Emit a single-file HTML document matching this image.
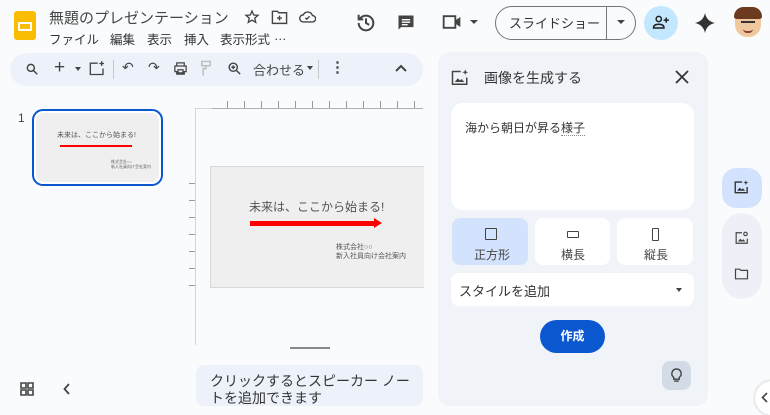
<!DOCTYPE html>
<html><head><meta charset="utf-8"><style>
*{box-sizing:border-box;margin:0;padding:0}
body{width:770px;height:414px;overflow:hidden;background:#f9fbfd;font-family:"Liberation Sans","Noto Sans CJK JP",sans-serif;color:#1f1f1f;position:relative}
.a{position:absolute}
svg{display:block}
.m{position:absolute;top:29px;font-size:12.5px;color:#333;white-space:nowrap}
</style></head><body>
<!-- logo -->
<div class="a" style="left:14px;top:11px;width:22px;height:29px;background:#fbbc04;border-radius:3px"></div>
<div class="a" style="left:18px;top:22px;width:14px;height:9px;border:2px solid #fff;border-radius:1px"></div>
<div class="a" style="left:49px;top:7px;font-size:15px;color:#444;white-space:nowrap">無題のプレゼンテーション</div>
<svg class="a" style="left:244px;top:9px" width="16" height="16" viewBox="0 0 24 24"><path d="M12 3l2.6 6 6.4.5-4.9 4.2 1.5 6.3L12 16.7 6.4 20l1.5-6.3L3 9.5l6.4-.5z" fill="none" stroke="#444" stroke-width="2"/></svg>
<svg class="a" style="left:271px;top:9px" width="17" height="16" viewBox="0 0 24 22"><path d="M2 3h7l2 2h11v15H2z M12 9v7M8.5 12.5h7" fill="none" stroke="#444" stroke-width="2"/></svg>
<svg class="a" style="left:299px;top:10px" width="17" height="14" viewBox="0 0 24 18"><path d="M6 16a5 5 0 010-10 7 7 0 0113 1 4.5 4.5 0 010 9z M9 10l2 2 4-4" fill="none" stroke="#444" stroke-width="2"/></svg>
<span class="m" style="left:49px">ファイル</span>
<span class="m" style="left:110px">編集</span>
<span class="m" style="left:147px">表示</span>
<span class="m" style="left:184px">挿入</span>
<span class="m" style="left:220px">表示形式</span>
<span class="m" style="left:274px">…</span>
<!-- history, comment -->
<svg class="a" style="left:355px;top:12px" width="22" height="22" viewBox="0 0 24 24"><path d="M4 12a8 8 0 108-8 8 8 0 00-6.5 3.3M4 3v5h5M12 7v5l3.5 2" fill="none" stroke="#444" stroke-width="2.2"/></svg>
<svg class="a" style="left:396px;top:13px" width="20" height="20" viewBox="0 0 24 24"><path d="M3 3h18v14H6l-3 3z" fill="#444"/><path d="M7 8h10M7 11h10M7 14h7" stroke="#fff" stroke-width="1.6"/></svg>
<svg class="a" style="left:442px;top:14px" width="20" height="16" viewBox="0 0 24 18"><path d="M2 2h14v14H2z" fill="none" stroke="#444" stroke-width="2.2"/><path d="M16 7l6-4v12l-6-4z" fill="#444"/></svg>
<div class="a" style="left:470px;top:20px;border:4px solid transparent;border-top:4px solid #444"></div>
<!-- slideshow btn -->
<div class="a" style="left:495px;top:6px;width:141px;height:34px;border:1px solid #747775;border-radius:17px"></div>
<div class="a" style="left:606px;top:7px;width:1px;height:32px;background:#747775"></div>
<div class="a" style="left:509px;top:13px;font-size:13px;color:#333">スライドショー</div>
<div class="a" style="left:617px;top:20px;border:4px solid transparent;border-top:4px solid #444"></div>
<div class="a" style="left:644px;top:6px;width:34px;height:34px;border-radius:50%;background:#c2e7ff"></div>
<svg class="a" style="left:652px;top:14px" width="18" height="16" viewBox="0 0 24 20"><circle cx="9" cy="6" r="3.5" fill="none" stroke="#1f1f1f" stroke-width="2"/><path d="M2 18c0-4 3.5-5 7-5s7 1 7 5z M19 4v7M15.5 7.5h7" fill="none" stroke="#1f1f1f" stroke-width="2"/></svg>
<svg class="a" style="left:694px;top:12px" width="22" height="22" viewBox="0 0 24 24"><path d="M12 1c1 6 5 10 11 11-6 1-10 5-11 11-1-6-5-10-11-11 6-1 10-5 11-11z" fill="#333"/></svg>
<!-- avatar -->
<div class="a" style="left:735px;top:9px;width:26px;height:28px;border-radius:45%;background:#f0c8a0"></div>
<div class="a" style="left:734px;top:7px;width:28px;height:12px;border-radius:12px 12px 3px 3px;background:#6b3a1f"></div>
<div class="a" style="left:741px;top:21px;width:14px;height:3px;border-top:2px solid #333"></div>
<div class="a" style="left:743px;top:29px;width:10px;height:4px;border-bottom:2px solid #8a4030;border-radius:0 0 5px 5px"></div>
<!-- toolbar -->
<div class="a" style="left:10px;top:53px;width:413px;height:33px;background:#edf2fa;border-radius:17px"></div>
<div class="a" style="left:25px;top:60px;font-size:15px;color:#444;white-space:nowrap">
<svg class="a" style="left:0;top:2px" width="14" height="14" viewBox="0 0 24 24"><circle cx="10" cy="10" r="6" fill="none" stroke="#444" stroke-width="2.5"/><path d="M14.5 14.5L21 21" stroke="#444" stroke-width="2.5"/></svg>
<span class="a" style="left:29px;top:-3px;font-size:19px">+</span>
<div class="a" style="left:50px;top:7px;border:3.5px solid transparent;border-top:4px solid #444"></div>
<svg class="a" style="left:64px;top:1px" width="16" height="15" viewBox="0 0 24 22"><path d="M13 3H2v17h19v-9" fill="none" stroke="#444" stroke-width="2"/><path d="M19 0v7M15.5 3.5h7" stroke="#444" stroke-width="2"/></svg>
<div class="a" style="left:88px;top:0px;width:1px;height:19px;background:#c4c7c5"></div>
<span class="a" style="left:97px;top:-1px;font-size:14px">↶</span>
<span class="a" style="left:123px;top:-1px;font-size:14px">↷</span>
<svg class="a" style="left:148px;top:1px" width="15" height="15" viewBox="0 0 24 24"><path d="M6 3h12v5H6z M3 8h18v9h-3v4H6v-4H3z M8 14h8v5H8z" fill="none" stroke="#444" stroke-width="2"/></svg>
<svg class="a" style="left:175px;top:0px" width="12" height="17" viewBox="0 0 16 24"><path d="M2 2h12v6H2z M8 8v4H4v10" fill="none" stroke="#bbb" stroke-width="2"/></svg>
<svg class="a" style="left:202px;top:1px" width="15" height="15" viewBox="0 0 24 24"><circle cx="10" cy="10" r="6.5" fill="none" stroke="#444" stroke-width="2.3"/><path d="M15 15l6 6M10 7v6M7 10h6" stroke="#444" stroke-width="2.3"/></svg>
<span class="a" style="left:228px;top:0px;font-size:13px">合わせる</span>
<div class="a" style="left:282px;top:6px;border:3.5px solid transparent;border-top:4px solid #444"></div>
<div class="a" style="left:293px;top:0px;width:1px;height:19px;background:#c4c7c5"></div>
<span class="a" style="left:305px;top:-2px;font-size:15px;font-weight:bold">⋮</span>
<svg class="a" style="left:370px;top:4px" width="12" height="8" viewBox="0 0 12 8"><path d="M1 7l5-5 5 5" fill="none" stroke="#444" stroke-width="2"/></svg>
</div>
<!-- thumbnail -->
<div class="a" style="left:18px;top:111px;font-size:12px;color:#444">1</div>
<div class="a" style="left:32px;top:109px;width:131px;height:77px;border:2px solid #0b57d0;border-radius:11px;background:#fff;padding:2px"><div style="width:100%;height:100%;background:#efefef;border-radius:8px;position:relative">
<div class="a" style="left:21px;top:17px;font-size:7px;color:#555">未来は、ここから始まる!</div>
<div class="a" style="left:24px;top:32px;width:72px;height:2px;background:#f00"></div>
<div class="a" style="left:75px;top:46px;font-size:4px;color:#666;line-height:5px">株式会社○○<br>新入社員向け会社案内</div>
</div></div>
<!-- ruler -->
<div class="a" style="left:212px;top:108px;width:211px;height:1px;background:#b0b0b0"></div>
<div class="a" style="left:195px;top:108px;width:1px;height:237px;background:#d6d6d6"></div>
<div class="a" style="left:195px;top:108px;width:17px;height:1px;background:#d6d6d6"></div>
<div class="a" style="left:227px;top:101px;width:200px;height:7px;background:repeating-linear-gradient(90deg,#999 0 1px,transparent 1px 17px)"></div>
<div class="a" style="left:189px;top:183px;width:6px;height:104px;background:repeating-linear-gradient(180deg,#999 0 1px,transparent 1px 17px)"></div>
<!-- slide -->
<div class="a" style="left:210px;top:166px;width:214px;height:122px;background:#efefef;border:1px solid #d8d8d8;border-right:none">
<div class="a" style="left:38px;top:31px;font-size:12px;color:#555;white-space:nowrap">未来は、ここから始まる!</div>
<div class="a" style="left:39px;top:54px;width:126px;height:5px;background:#f00"></div>
<div class="a" style="left:163px;top:51px;border:5px solid transparent;border-left:8px solid #f00"></div>
<div class="a" style="left:125px;top:76px;font-size:7px;color:#555;line-height:9px;white-space:nowrap">株式会社○○<br>新入社員向け会社案内</div>
</div>
<div class="a" style="left:290px;top:347px;width:40px;height:2px;background:#888"></div>
<!-- notes -->
<div class="a" style="left:196px;top:365px;width:227px;height:41px;background:#edf2fa;border-radius:8px;overflow:hidden">
<div style="padding:8px 0 0 14px;font-size:14px;color:#333;line-height:17px">クリックするとスピーカー ノー<br>トを追加できます</div></div>
<svg class="a" style="left:20px;top:382px" width="14" height="14" viewBox="0 0 14 14"><path d="M1 1h5v5H1zM8 1h5v5H8zM1 8h5v5H1zM8 8h5v5H8z" fill="none" stroke="#444" stroke-width="1.6"/></svg>
<svg class="a" style="left:63px;top:383px" width="8" height="12" viewBox="0 0 8 12"><path d="M6 1L1.5 6 6 11" fill="none" stroke="#444" stroke-width="1.8"/></svg>
<!-- panel -->
<div class="a" style="left:438px;top:52px;width:270px;height:354px;background:#f0f4f9;border-radius:12px"></div>
<svg class="a" style="left:451px;top:69px" width="18" height="17" viewBox="0 0 24 22"><path d="M13 3H2v17h19v-9" fill="none" stroke="#444" stroke-width="2"/><path d="M5 17l4-5 3 3 2-2 4 4z" fill="#444"/><path d="M19 0l1 3 3 1-3 1-1 3-1-3-3-1 3-1z" fill="#444"/></svg>
<div class="a" style="left:484px;top:68px;font-size:14px;color:#333">画像を生成する</div>
<svg class="a" style="left:675px;top:70px" width="14" height="14" viewBox="0 0 14 14"><path d="M1 1l12 12M13 1L1 13" stroke="#333" stroke-width="1.8"/></svg>
<div class="a" style="left:451px;top:103px;width:243px;height:107px;background:#fff;border-radius:12px"></div>
<div class="a" style="left:465px;top:119px;font-size:12px;color:#333">海から朝日が昇る<span style="border-bottom:1px dotted #888">様子</span></div>
<div class="a" style="left:452px;top:218px;width:76px;height:47px;background:#d3e3fd;border-radius:8px"></div>
<div class="a" style="left:535px;top:218px;width:75px;height:47px;background:#fff;border-radius:8px"></div>
<div class="a" style="left:617px;top:218px;width:76px;height:47px;background:#fff;border-radius:8px"></div>
<div class="a" style="left:485px;top:228px;width:12px;height:12px;border:1.5px solid #444;border-radius:1px"></div>
<div class="a" style="left:567px;top:231px;width:12px;height:7px;border:1.5px solid #444;border-radius:1px"></div>
<div class="a" style="left:652px;top:228px;width:7px;height:13px;border:1.5px solid #444;border-radius:1px"></div>
<div class="a" style="left:474px;top:246px;font-size:12px;color:#444">正方形</div>
<div class="a" style="left:561px;top:246px;font-size:12px;color:#444">横長</div>
<div class="a" style="left:644px;top:246px;font-size:12px;color:#444">縦長</div>
<div class="a" style="left:451px;top:273px;width:243px;height:33px;background:#fff;border-radius:8px"></div>
<div class="a" style="left:459px;top:281px;font-size:13px;color:#333">スタイルを追加</div>
<div class="a" style="left:676px;top:288px;border:3.5px solid transparent;border-top:4px solid #444"></div>
<div class="a" style="left:540px;top:320px;width:65px;height:33px;background:#0b57d0;border-radius:17px;color:#fff;font-size:12px;font-weight:bold;text-align:center;line-height:33px">作成</div>
<div class="a" style="left:662px;top:361px;width:29px;height:29px;background:#d3dbe6;border-radius:8px"></div>
<svg class="a" style="left:670px;top:368px" width="13" height="15" viewBox="0 0 14 16"><path d="M7 1a5 5 0 00-3 9v2h6v-2a5 5 0 00-3-9z M4.5 14h5" fill="none" stroke="#444" stroke-width="1.5"/></svg>
<!-- right rail -->
<div class="a" style="left:722px;top:168px;width:40px;height:40px;background:#d3e3fd;border-radius:14px"></div>
<svg class="a" style="left:734px;top:180px" width="15" height="14" viewBox="0 0 24 22"><path d="M13 3H2v17h19v-9" fill="none" stroke="#333" stroke-width="2.2"/><path d="M5 17l4-5 3 3 2-2 4 4z" fill="#333"/><path d="M19 0l1 3 3 1-3 1-1 3-1-3-3-1 3-1z" fill="#333"/></svg>
<div class="a" style="left:722px;top:213px;width:40px;height:86px;background:#edf1f7;border-radius:20px"></div>
<svg class="a" style="left:735px;top:231px" width="14" height="14" viewBox="0 0 24 24"><path d="M12 3H2v18h19v-8" fill="none" stroke="#444" stroke-width="2"/><circle cx="18" cy="5" r="3" fill="none" stroke="#444" stroke-width="2"/><path d="M5 18l4-5 3 3 2-2 4 4z" fill="#444"/></svg>
<svg class="a" style="left:734px;top:268px" width="15" height="12" viewBox="0 0 24 20"><path d="M2 2h7l2 2h11v14H2z" fill="none" stroke="#444" stroke-width="2"/></svg>
<div class="a" style="left:755px;top:381px;width:34px;height:34px;background:#fff;border-radius:50%;box-shadow:0 0 3px rgba(0,0,0,.25)"></div>
<svg class="a" style="left:761px;top:392px" width="7" height="11" viewBox="0 0 7 11"><path d="M6 1L1.5 5.5 6 10" fill="none" stroke="#444" stroke-width="1.6"/></svg>
</body></html>
